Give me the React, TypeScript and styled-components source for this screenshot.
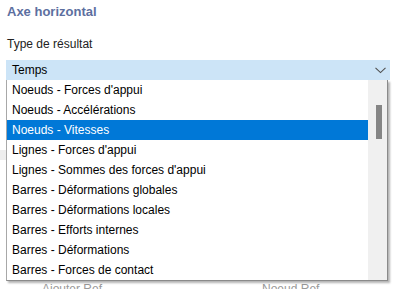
import React, { useState } from 'react';
import styled, { createGlobalStyle } from 'styled-components';

const GlobalStyle = createGlobalStyle`
  body {
    margin: 0;
    background: #fff;
    font-family: Arial, 'Liberation Sans', sans-serif;
    overflow: hidden;
  }
`;

const options = [
  "Noeuds - Forces d'appui",
  'Noeuds - Accélérations',
  'Noeuds - Vitesses',
  "Lignes - Forces d'appui",
  "Lignes - Sommes des forces d'appui",
  'Barres - Déformations globales',
  'Barres - Déformations locales',
  'Barres - Efforts internes',
  'Barres - Déformations',
  'Barres - Forces de contact',
];

const App = () => {
  const [selected, setSelected] = useState(2);

  return (
    <Wrap>
      <GlobalStyle />
      <Title>Axe horizontal</Title>
      <Label>Type de résultat</Label>
      <SelectArea>
        <SelectBar>
          <span>Temps</span>
          <svg width="11" height="7" viewBox="0 0 11 7">
            <polyline points="0.5,0.8 5.5,5.6 10.5,0.8" fill="none" stroke="#505050" strokeWidth="1.1" />
          </svg>
        </SelectBar>
        <Behind>
          <GhostBlock />
          <GhostRow>
            <GhostText>Ajouter Ref</GhostText>
            <GhostText>Noeud Ref</GhostText>
          </GhostRow>
        </Behind>
        <Popup>
          <List>
            {options.map((o, i) => (
              <Item key={o} active={i === selected} onClick={() => setSelected(i)}>
                {o}
              </Item>
            ))}
          </List>
          <ScrollTrack>
            <Thumb />
          </ScrollTrack>
        </Popup>
      </SelectArea>
    </Wrap>
  );
};

export default App;

const Wrap = styled.div`
  padding: 4px 5px 0 6px;
`;

const Title = styled.div`
  font-size: 13px;
  font-weight: bold;
  line-height: 16px;
  color: #5d6f9f;
  padding-left: 1px;
`;

const Label = styled.div`
  margin-top: 16px;
  font-size: 12px;
  line-height: 16px;
  color: #222;
  padding-left: 1px;
`;

const SelectArea = styled.div`
  position: relative;
  margin-top: 8px;
`;

const SelectBar = styled.div`
  display: flex;
  align-items: center;
  justify-content: space-between;
  height: 20px;
  width: 384px;
  box-sizing: border-box;
  padding: 0 4px 0 6px;
  background: #cce4f7;
  font-size: 12px;
  color: #000;

  svg {
    margin-top: 1px;
  }
`;

const Behind = styled.div`
  display: flex;
  flex-direction: column;
`;

const GhostBlock = styled.div`
  height: 123px;
  margin-top: 70px;
  margin-left: -6px;
  border-top: 10px solid #eeeeee;
  width: 20px;
`;

const GhostRow = styled.div`
  display: flex;
  gap: 160px;
  padding-left: 36px;
  margin-top: -2px;
`;

const GhostText = styled.span`
  font-size: 12px;
  color: #999;
  line-height: 16px;
`;

const Popup = styled.div`
  position: absolute;
  top: 20px;
  left: 0;
  width: 382px;
  height: 201px;
  display: flex;
  background: #fff;
  border-left: 1px solid #a8a8a8;
  border-right: 1px solid #8a8a8a;
  border-bottom: 1px solid #8a8a8a;
  box-sizing: border-box;
  box-shadow: 2px 2px 2px rgba(0, 0, 0, 0.3);
`;

const List = styled.div`
  flex: 1;
  display: flex;
  flex-direction: column;
`;

const Item = styled.div<{ active: boolean }>`
  height: 20px;
  line-height: 20px;
  padding-left: 5px;
  font-size: 12px;
  white-space: nowrap;
  color: ${p => (p.active ? '#fff' : '#000')};
  background: ${p => (p.active ? '#0078d7' : 'transparent')};
  cursor: default;
`;

const ScrollTrack = styled.div`
  width: 19px;
  background: #f0f0f0;
  padding-top: 25px;
  box-sizing: border-box;
`;

const Thumb = styled.div`
  width: 6px;
  height: 34px;
  margin-left: 8px;
  background: #858585;
`;
